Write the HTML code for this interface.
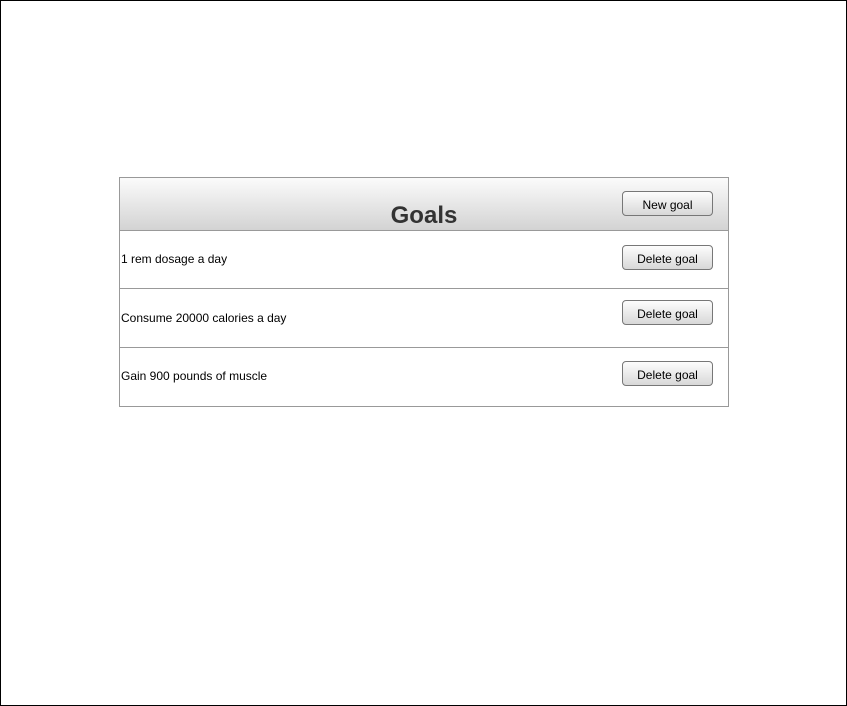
<!DOCTYPE html>
<html><head><style>
html,body{margin:0;padding:0;width:847px;height:706px;overflow:hidden;background:#fff;font-family:"Liberation Sans",Arial,sans-serif;}
.frame{position:absolute;left:0;top:0;width:845px;height:704px;border:1px solid #000;}
.panel{position:absolute;left:119px;top:177px;width:608px;height:228px;border:1px solid #999;}
.hdr{position:absolute;left:0;top:0;width:608px;height:52px;background:linear-gradient(#fbfbfb,#d3d3d3);border-bottom:1px solid #999;}
.title{position:absolute;left:0;width:608px;top:24px;text-align:center;font-weight:bold;font-size:24px;color:#333;line-height:28px;}
.row{position:absolute;left:0;width:608px;border-bottom:1px solid #999;}
.txt{position:absolute;left:1px;font-size:12px;color:#000;line-height:14px;}
.btn{position:absolute;left:502px;width:89px;height:23px;border:1px solid #777;border-radius:4px;background:linear-gradient(#fdfdfd,#d8d8d8);font-size:12px;text-align:center;line-height:26px;color:#000;}
</style></head><body>
<div class="frame"></div>
<div class="panel">
 <div class="hdr"><div class="title">Goals</div><div class="btn" style="top:13px">New goal</div></div>
 <div class="row" style="top:53px;height:57px"><div class="txt" style="top:21px">1 rem dosage a day</div><div class="btn" style="top:14px">Delete goal</div></div>
 <div class="row" style="top:111px;height:58px"><div class="txt" style="top:22px">Consume 20000 calories a day</div><div class="btn" style="top:11px">Delete goal</div></div>
 <div class="row" style="top:170px;height:58px;border-bottom:none"><div class="txt" style="top:21px">Gain 900 pounds of muscle</div><div class="btn" style="top:13px">Delete goal</div></div>
</div>
</body></html>
